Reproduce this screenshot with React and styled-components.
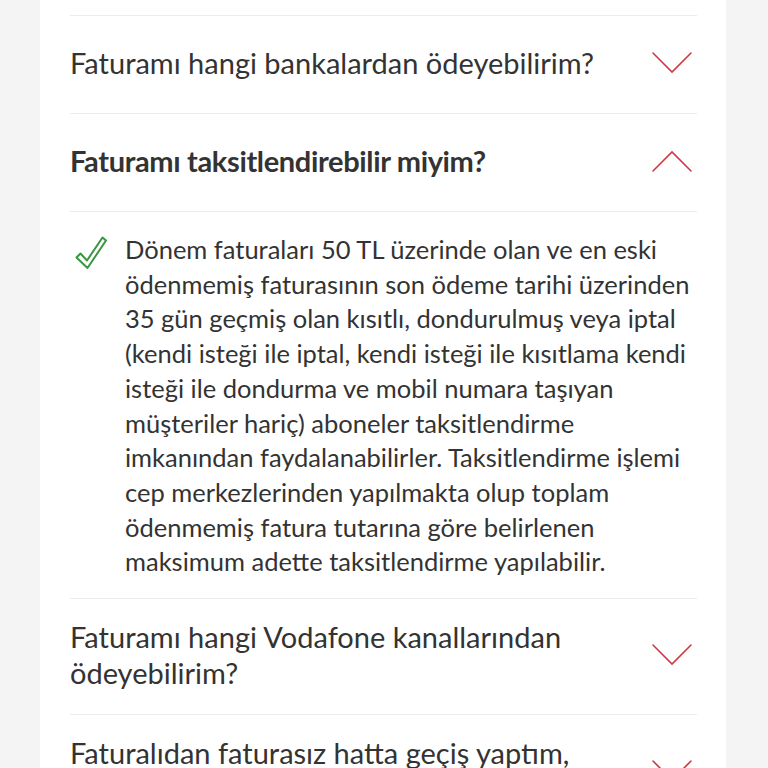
import React, { useState } from 'react';
import styled, { createGlobalStyle } from 'styled-components';

const GlobalStyle = createGlobalStyle`
  html, body {
    margin: 0;
    padding: 0;
    background: #f4f4f4;
    font-family: Lato, "Open Sans", "Liberation Sans", sans-serif;
    color: #333333;
    -webkit-font-smoothing: antialiased;
  }
`;

const Page = styled.div`
  min-height: 100vh;
  background: #f4f4f4;
  overflow: hidden;
`;

const Card = styled.section`
  margin-left: 40px;
  width: 686px;
  min-height: 100vh;
  background: #ffffff;
  box-sizing: border-box;
  padding: 15px 29px 0 30px;
`;

const Item = styled.div`
  border-top: 1px solid #ececec;
`;

const QuestionRow = styled.button`
  display: flex;
  align-items: center;
  justify-content: space-between;
  width: 100%;
  min-height: 97px;
  box-sizing: border-box;
  padding: 20px 0 23px;
  border: none;
  background: none;
  text-align: left;
  cursor: pointer;
  font-family: inherit;
`;

const QuestionText = styled.span`
  font-size: 29px;
  line-height: 36px;
  color: #333333;
  font-weight: ${p => (p.$open ? 700 : 400)};
  letter-spacing: ${p => (p.$open ? '-0.35px' : '0')};
  max-width: 540px;
`;

const ChevronBox = styled.span`
  display: flex;
  flex: 0 0 auto;
  margin-right: 5px;
`;

const Answer = styled.div`
  display: flex;
  align-items: flex-start;
  gap: 18px;
  border-top: 1px solid #ececec;
  padding: 20px 0 19px 5px;
`;

const CheckBox = styled.span`
  display: flex;
  flex: 0 0 auto;
  margin-top: 4px;
`;

const AnswerText = styled.p`
  margin: 0;
  margin-right: -4px;
  font-size: 25.5px;
  line-height: 34.7px;
  color: #333333;
`;

const Chevron = ({ up }) => (
  <ChevronBox>
    <svg width="40" height="22" viewBox="0 0 40 22">
      <polyline
        points={up ? '1,21 20,2 39,21' : '1,1 20,20 39,1'}
        fill="none"
        stroke="#cc3a44"
        strokeWidth="1.6"
        strokeLinecap="round"
        strokeLinejoin="miter"
      />
    </svg>
  </ChevronBox>
);

const Check = () => (
  <CheckBox>
    <svg width="32" height="34" viewBox="0 0 32 34">
      <path
        d="M1.5 21.5 L5.5 17.5 L12 24.5 L27.5 1.5 L31 4.5 L12.5 32 Z"
        fill="none"
        stroke="#3a9640"
        strokeWidth="2"
        strokeLinejoin="round"
      />
    </svg>
  </CheckBox>
);

const faqs = [
  { q: 'Faturamı hangi bankalardan ödeyebilirim?' },
  {
    q: 'Faturamı taksitlendirebilir miyim?',
    a: 'Dönem faturaları 50 TL üzerinde olan ve en eski ödenmemiş faturasının son ödeme tarihi üzerinden 35 gün geçmiş olan kısıtlı, dondurulmuş veya iptal (kendi isteği ile iptal, kendi isteği ile kısıtlama kendi isteği ile dondurma ve mobil numara taşıyan müşteriler hariç) aboneler taksitlendirme imkanından faydalanabilirler. Taksitlendirme işlemi cep merkezlerinden yapılmakta olup toplam ödenmemiş fatura tutarına göre belirlenen maksimum adette taksitlendirme yapılabilir.',
  },
  { q: 'Faturamı hangi Vodafone kanallarından ödeyebilirim?' },
  { q: 'Faturalıdan faturasız hatta geçiş yaptım, eski faturamı nasıl ödeyebilirim?' },
];

const App = () => {
  const [open, setOpen] = useState(1);

  return (
    <>
      <GlobalStyle />
      <Page>
        <Card>
          {faqs.map((item, index) => (
            <Item key={index}>
              <QuestionRow onClick={() => setOpen(open === index ? null : index)}>
                <QuestionText $open={open === index}>{item.q}</QuestionText>
                <Chevron up={open === index} />
              </QuestionRow>
              {open === index && item.a && (
                <Answer>
                  <Check />
                  <AnswerText>{item.a}</AnswerText>
                </Answer>
              )}
            </Item>
          ))}
        </Card>
      </Page>
    </>
  );
};

export default App;
